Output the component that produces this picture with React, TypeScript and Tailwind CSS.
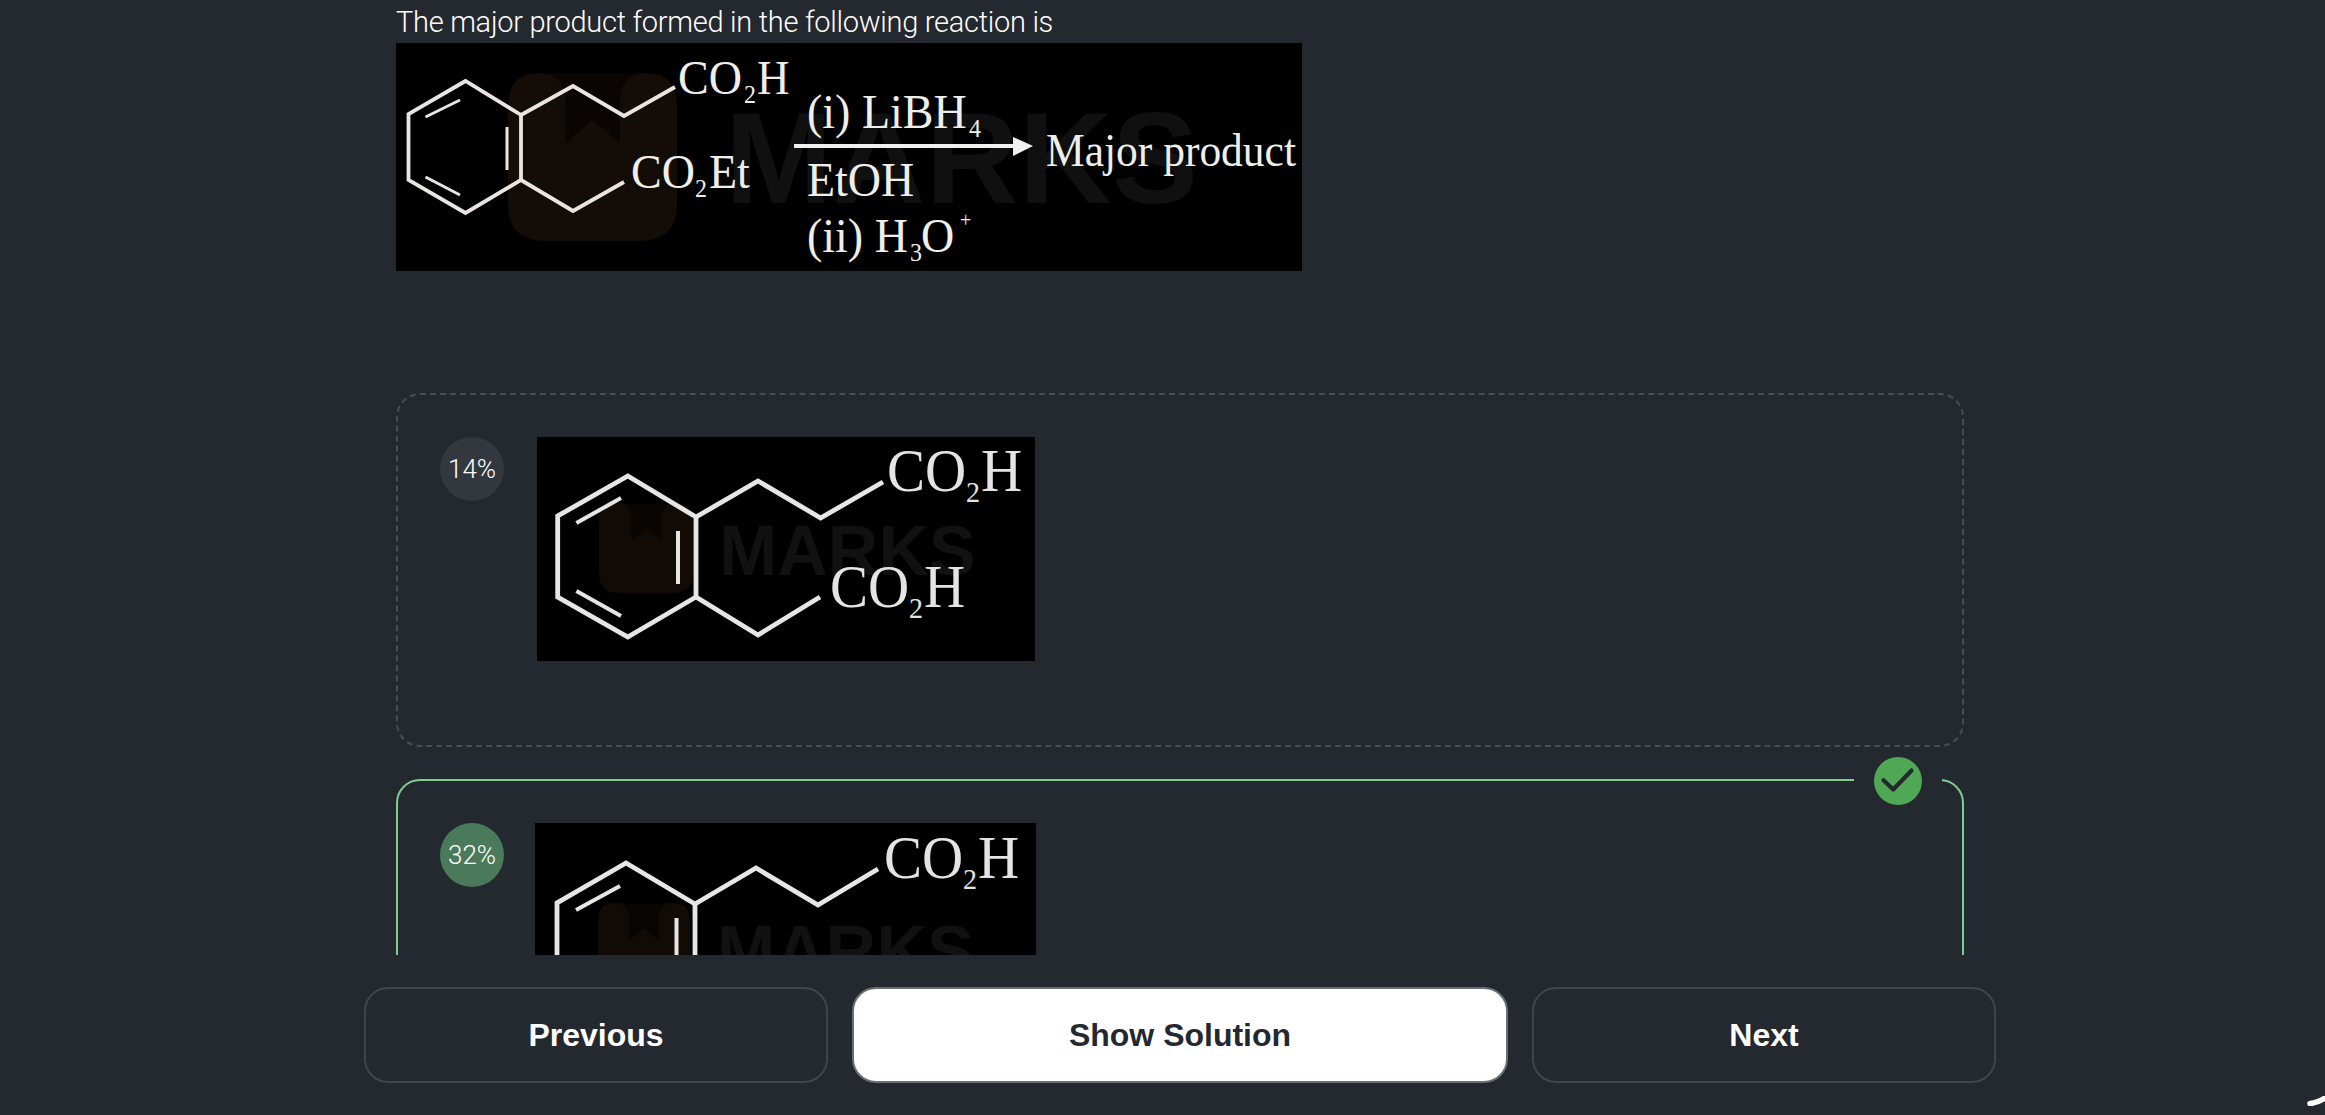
import React from "react";

const serif = "'Liberation Serif', serif";
const sans = "'Liberation Sans', Arial, sans-serif";

function Logo({ x, y, w, h, fill }: { x: number; y: number; w: number; h: number; fill: string }) {
  return (
    <g transform={`translate(${x} ${y}) scale(${w / 100} ${h / 100})`}>
      <rect width="100" height="100" rx="20" fill={fill} opacity="0.45" />
      <path
        fill={fill}
        d="M0 20Q0 0 18 0Q34 0 34 18V42L50 28L66 42V18Q66 0 82 0Q100 0 100 20V78Q100 100 78 100H22Q0 100 0 78Z"
      />
    </g>
  );
}

function T({ x, y, s, c, children }: { x: number; y: number; s: number; c?: string; children: React.ReactNode }) {
  return (
    <text transform={`translate(${x} ${y}) scale(1 1.06)`} fontSize={s} fontFamily={serif} fill={c || "#eeeeea"}>
      {children}
    </text>
  );
}

function Reaction() {
  const st = { fill: "none", stroke: "#e9e6e1", strokeWidth: 3.8, strokeLinejoin: "miter" as const };
  return (
    <svg width="906" height="228" viewBox="0 0 906 228" className="block bg-black">
      <Logo x={112} y={30} w={169} h={168} fill="#140c06" />
      <text x={329} y={160} fontSize={129} fontWeight={700} fontFamily={sans} fill="#101010">MARKS</text>
      <polygon points="69.5,38 12.5,71 12.5,137 69.5,170 125,137 125,72" {...st} />
      <path d="M29.5 74L64 57M111 84V127M29.5 134L64 152" {...st} strokeWidth={3} />
      <polyline points="125,72 177,43 228,73 279,44" {...st} />
      <polyline points="125,137 177,168 228,139" {...st} />
      <T x={282} y={51} s={46}>CO</T><T x={348} y={60} s={24}>2</T><T x={361} y={51} s={45}>H</T>
      <T x={235} y={145} s={46}>CO</T><T x={299} y={154} s={24}>2</T><T x={313} y={145} s={46}>Et</T>
      <T x={411} y={85} s={46}>(i) LiBH</T><T x={573} y={94} s={24}>4</T>
      <rect x={398} y={101} width={222} height={4} fill="#f0f0f0" />
      <polygon points="617,94 637,103 617,113" fill="#f0f0f0" />
      <T x={650} y={123} s={43.5}>Major product</T>
      <T x={411} y={153} s={46}>EtOH</T>
      <T x={411} y={209} s={46}>(ii) H</T><T x={514} y={218} s={24}>3</T><T x={525} y={209} s={46}>O</T><T x={564} y={184} s={20}>+</T>
    </svg>
  );
}

function OptionA() {
  const st = { fill: "none", stroke: "#e6e6e6", strokeWidth: 4.8 };
  return (
    <svg width="498" height="224" viewBox="0 0 498 224" className="block bg-black">
      <Logo x={62} y={66} w={94} h={90} fill="#120b05" />
      <text x={182} y={138} fontSize={70} fontWeight={700} fontFamily={sans} fill="#111111">MARKS</text>
      <polygon points="90.8,39 20.7,79 20.7,160 90.8,200 159,160 159,80" {...st} />
      <path d="M39.4 86L84 61M141 94V147M39.4 154L84 179" {...st} strokeWidth={4} />
      <polyline points="159,80 221,44 283.6,81 346,45" {...st} />
      <polyline points="159,160 221,198 283,160" {...st} />
      <T x={350} y={54} s={57} c="#e4e4e4">CO</T><T x={429} y={65} s={28} c="#e4e4e4">2</T><T x={444} y={54} s={57} c="#e4e4e4">H</T>
      <T x={293} y={170} s={57} c="#e4e4e4">CO</T><T x={372} y={181} s={28} c="#e4e4e4">2</T><T x={387} y={170} s={57} c="#e4e4e4">H</T>
    </svg>
  );
}

function OptionB() {
  const st = { fill: "none", stroke: "#e6e6e6", strokeWidth: 4.8 };
  return (
    <svg width="501" height="240" viewBox="0 0 501 240" className="block bg-black shrink-0">
      <Logo x={63} y={80} w={92} h={90} fill="#120b05" />
      <text x={182} y={152} fontSize={70} fontWeight={700} fontFamily={sans} fill="#111111">MARKS</text>
      <polygon points="91,40 22,80 22,161 91,201 160,161 160,81" {...st} />
      <path d="M41 87L85 63M141.5 95V148M41 155L85 180" {...st} strokeWidth={4} />
      <polyline points="160,81 221,45 283,82 343,46" {...st} />
      <T x={349} y={55} s={57} c="#e4e4e4">CO</T><T x={428} y={66} s={28} c="#e4e4e4">2</T><T x={443} y={55} s={57} c="#e4e4e4">H</T>
    </svg>
  );
}

export default function App() {
  return (
    <div className="relative flex h-screen w-full flex-col overflow-hidden bg-[#24282f] font-['Liberation_Sans',Arial,sans-serif] text-white">
      <div className="h-[955px] shrink-0 overflow-hidden pl-[396px]">
        <p className="h-[43px] pt-[2px] font-['Roboto',sans-serif] text-[29px] font-light leading-[40px] tracking-[-0.28px] text-white">
          The major product formed in the following reaction is
        </p>
        <Reaction />
        <div className="mt-[122px] flex h-[354px] w-[1568px] items-start gap-[33px] rounded-3xl border-2 border-dashed border-[#484c53] pl-[42px] pt-[42px]">
          <div className="flex h-16 w-16 shrink-0 items-center justify-center rounded-full bg-[#33373e] font-['Roboto',sans-serif] text-[26px] font-light">14%</div>
          <OptionA />
        </div>
        <div className="relative mt-8 flex h-[400px] w-[1568px] items-start gap-[31px] rounded-3xl border-2 border-[#7fce8f] pl-[42px] pt-[42px]">
          <div className="flex h-16 w-16 shrink-0 items-center justify-center rounded-full bg-[#4a7a5a] font-['Roboto',sans-serif] text-[26px] font-light">32%</div>
          <OptionB />
          <div className="absolute right-5 top-[-24px] bg-[#24282f] px-5">
            <div className="h-12 w-12 rounded-full bg-[#4fa853]">
              <svg width="48" height="48" viewBox="0 0 48 48" fill="none">
                <path d="M9.5 23.2L19.2 32.5L37.5 13.5" stroke="#24282f" strokeWidth="4.2" strokeLinecap="round" strokeLinejoin="round" />
              </svg>
            </div>
          </div>
        </div>
      </div>
      <div className="flex gap-6 pl-[364px] pt-8">
        <button className="h-24 w-[464px] rounded-3xl border-2 border-[#40444c] bg-[#24282f] text-[32px] font-bold text-white">Previous</button>
        <button className="h-24 w-[656px] rounded-3xl border-2 border-[#6a6e75] bg-white text-[32px] font-bold text-[#24282f]">Show Solution</button>
        <button className="h-24 w-[464px] rounded-3xl border-2 border-[#40444c] bg-[#24282f] text-[32px] font-bold text-white">Next</button>
      </div>
      <svg className="absolute bottom-[9px] right-0" width="18" height="10" viewBox="0 0 18 10">
        <path d="M3 7.5Q10 7 18 2" stroke="#ffffff" strokeWidth="5.5" strokeLinecap="round" fill="none" />
      </svg>
    </div>
  );
}
